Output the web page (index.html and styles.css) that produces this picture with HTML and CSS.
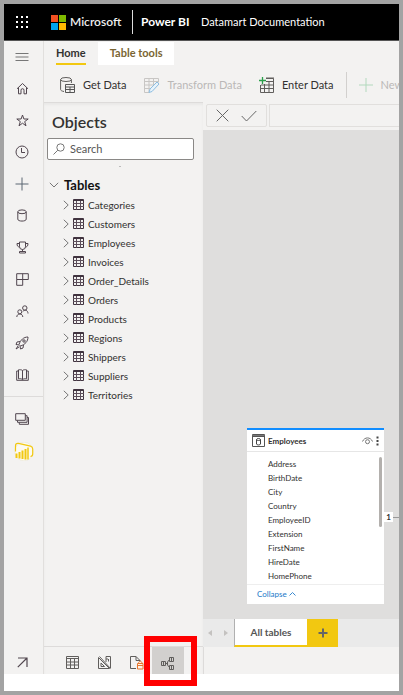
FILE: index.html
```html
<!DOCTYPE html>
<html lang="en">
<head>
<meta charset="utf-8">
<title>Datamart Documentation - Power BI</title>
<link rel="stylesheet" href="styles.css">
</head>
<body>
<svg class="defs" aria-hidden="true">
  <symbol id="table" viewBox="0 0 11 11"><path d="M.5 .5h10v10h-10zM0 1.5h11" fill="none" stroke="#40333f"/><path d="M0 4.500h11M0 7.500h11M3.500 2v9M7.500 2v9" fill="none" stroke="#5d4f5b"/></symbol>
  <symbol id="chev" viewBox="0 0 6 10"><path d="M.8 .8l4.4 4.2-4.4 4.2" fill="none" stroke="#777"/></symbol>
</svg>
<div class="app">
  <header class="top">
    <button class="waffle" aria-label="App launcher"><svg width="14" height="14" viewBox="0 0 14 14" fill="#fff"><path d="M1 1h2v2H1zM6 1h2v2H6zM11 1h2v2h-2zM1 6h2v2H1zM6 6h2v2H6zM11 6h2v2h-2zM1 11h2v2H1zM6 11h2v2H6zM11 11h2v2h-2z"/></svg></button>
    <svg width="15" height="15" viewBox="0 0 15 15"><path fill="#f25022" d="M0 0h7v7H0z"/><path fill="#7fba00" d="M8 0h7v7H8z"/><path fill="#00a4ef" d="M0 8h7v7H0z"/><path fill="#ffb900" d="M8 8h7v7H8z"/></svg>
    <span class="brand">Microsoft</span>
    <span class="product">Power BI</span>
    <span class="doc">Datamart Documentation</span>
  </header>
  <div class="body">
    <nav class="rail" aria-label="Main">
      <div class="rail-main">
        <button aria-label="Menu"><svg width="14" height="10" viewBox="0 0 14 10"><path d="M.5 1.5h13M.5 5h13M.5 8.5h13" stroke="#777"/></svg></button>
        <button aria-label="Home"><svg width="13" height="13" viewBox="0 0 13 13"><path d="M1 6.8L6.5 1.5 12 6.8M2.5 5.6v6.2H5V8.2a1.5 1.5 0 013 0v3.6h2.500V5.600"/></svg></button>
        <button aria-label="Favorites"><svg width="13" height="13" viewBox="0 0 13 13"><path d="M6.500 1l1.400 4h4.300L8.700 7.600 10 11.800 6.500 9.200 3 11.800 4.300 7.600 .8 5h4.300z"/></svg></button>
        <button aria-label="Recent"><svg width="14" height="14" viewBox="0 0 14 14"><circle cx="7" cy="7" r="6"/><path d="M6.500 3v4.500H10"/></svg></button>
        <button aria-label="Create"><svg width="14" height="14" viewBox="0 0 14 14"><path d="M7 .5v13M.5 7h13" stroke="#5b6673"/></svg></button>
        <button aria-label="Datasets"><svg width="10" height="13" viewBox="0 0 10 13"><path d="M.8 2.800v7.400c0 2.500 8.400 2.500 8.400 0V2.800"/><ellipse cx="5" cy="2.800" rx="4.200" ry="1.900"/></svg></button>
        <button aria-label="Goals"><svg width="13" height="13" viewBox="0 0 13 13"><path d="M3.500 1h6v4.500a3 3 0 01-6 0zM3.500 2.500H1c0 2.500 1 3.500 2.800 3.500M9.500 2.500H12c0 2.500-1 3.500-2.800 3.500M6.500 8.500v2M3.500 12v-1.500h6V12z"/></svg></button>
        <button aria-label="Apps"><svg width="13" height="13" viewBox="0 0 13 13"><path d="M.7 .7h11.600v5.800H.7zM.7 6.500v5.800h6V.7"/></svg></button>
        <button aria-label="Shared with me"><svg width="13" height="13" viewBox="0 0 13 13"><circle cx="8.800" cy="3" r="2.200"/><circle cx="3.800" cy="6.800" r="2"/><path d="M.8 12c0-4 6-4 6 0M6.800 6.500c2-2.500 5.200-1.200 5.200 2"/></svg></button>
        <button aria-label="Deployment pipelines"><svg width="14" height="14" viewBox="0 0 14 14"><path d="M4 8.500C5.500 4 8.500 1 13 1c0 4.500-3 7.500-7.500 9zM5 5.500l-3 .5-1 2.500 3 .5M8.500 9l-.5 3-2.500 1-.5-3M3 10l-2 3 3-2"/><circle cx="9" cy="5" r="1.200"/></svg></button>
        <button aria-label="Learn"><svg width="13" height="12" viewBox="0 0 13 12"><path d="M6.500 1.500v9M6.500 1.500C5.500 .6 3.500 .6 2.500 .8v9c1.500-.2 3-.2 4 .8 1-1 2.500-1 4-.8v-9c-1-.2-3-.2-4 .7M2.500 2H.7v9.300h11.600V2h-1.800"/></svg></button>
      </div>
      <div class="rail-spaces">
        <button aria-label="Workspaces"><svg width="14" height="12" viewBox="0 0 14 12"><path d="M.7 .7h9.600v6.600H.7zM2.500 7.500v1.800h9.600V2.700h-1.800M4.300 9.500v1.800h9.200V4.500h-1.400"/></svg></button>
        <button class="workspace" aria-label="Power BI workspace"><svg width="20" height="19" viewBox="0 0 20 19"><circle cx="10" cy="9.500" r="9.300" fill="#fcfaf0" stroke="#e8e4d0" stroke-width=".5"/><path d="M1.500 9.500V4c0-2 1-3 3-2.600l12 2.800c1.500.4 2.200 1.300 2.200 2.800v5c0 1.500-.8 2.300-2.200 2.500" fill="none" stroke="#f2c811" stroke-width="1.200"/><path d="M2.500 11.500v4.500M5.500 10v6.500M8.500 8.500v8.500M11.500 7v10.500" stroke="#f2c811" stroke-width="2"/><path d="M14 5.500v12" stroke="#f2c811" stroke-width="1.500"/></svg></button>
      </div>
      <button class="expand" aria-label="Expand"><svg width="11" height="11" viewBox="0 0 11 11"><path d="M1 1h9v9M10 1L.8 10.200" stroke-width="1.200"/></svg></button>
    </nav>
    <div class="work">
      <div class="ribbon">
        <div class="tabs"><button class="tab active">Home</button><button class="tab tools">Table tools</button></div>
        <div class="commands">
          <button class="get"><svg width="15" height="16" viewBox="0 0 15 16"><g fill="none" stroke="#605e5c"><path d="M4 14.500c-2-.3-3.400-1-3.400-2V2.500M11.400 2.500V6"/><ellipse cx="6" cy="2.500" rx="5.400" ry="2"/><path d="M5.500 7.500h9v8h-9zM5.500 10h9M5.500 12.500h9M10 10v5.500" stroke="#555"/></g></svg>Get Data</button>
          <button class="transform" disabled><svg width="16" height="15" viewBox="0 0 16 15"><path d="M5 14.500H.5V.5h14v4M.5 3.500h14M.5 7h9M.5 10.500h6M5 1v13M9.500 1v6" fill="none" stroke="#c8c6c4"/><path d="M6 11l7-7 2 2-7 7.500-3 1z" fill="#e8f3fb" stroke="#8dbde0"/></svg>Transform Data</button>
          <button class="enter"><svg width="15" height="16" viewBox="0 0 15 16"><path d="M7 1.500h7.500v14h-13V8M7 1h8M7 4.500h7.500M2 8h12.500M2 11.500h12.500M5.500 7v8.500M10 4.500v11" fill="none" stroke="#605e5c"/><path d="M3.500 0v7M0 3.500h7" stroke="#2ba04b" stroke-width="1.300"/></svg>Enter Data</button>
          <button class="new" disabled><svg width="14" height="14" viewBox="0 0 14 14"><path d="M7 0v14M0 7h14" stroke="#b2d9bd"/></svg>New</button>
        </div>
      </div>
      <div class="columns">
        <section class="objects">
          <h1>Objects</h1>
          <label class="search"><svg width="12" height="12" viewBox="0 0 12 12"><circle cx="7.500" cy="4.500" r="3.700"/><path d="M4.800 7.200L.5 11.500"/></svg><input type="search" aria-label="Search" placeholder="Search"></label>
          <div class="dot"></div>
          <h2><svg width="10" height="6" viewBox="0 0 10 6"><path d="M.8 .8L5 5 9.200 .8" fill="none" stroke="#777"/></svg>Tables</h2>
          <ul class="tree">
            <li><svg class="chev"><use href="#chev"/></svg><svg class="ti"><use href="#table"/></svg>Categories</li>
            <li><svg class="chev"><use href="#chev"/></svg><svg class="ti"><use href="#table"/></svg>Customers</li>
            <li><svg class="chev"><use href="#chev"/></svg><svg class="ti"><use href="#table"/></svg>Employees</li>
            <li><svg class="chev"><use href="#chev"/></svg><svg class="ti"><use href="#table"/></svg>Invoices</li>
            <li><svg class="chev"><use href="#chev"/></svg><svg class="ti"><use href="#table"/></svg>Order_Details</li>
            <li><svg class="chev"><use href="#chev"/></svg><svg class="ti"><use href="#table"/></svg>Orders</li>
            <li><svg class="chev"><use href="#chev"/></svg><svg class="ti"><use href="#table"/></svg>Products</li>
            <li><svg class="chev"><use href="#chev"/></svg><svg class="ti"><use href="#table"/></svg>Regions</li>
            <li><svg class="chev"><use href="#chev"/></svg><svg class="ti"><use href="#table"/></svg>Shippers</li>
            <li><svg class="chev"><use href="#chev"/></svg><svg class="ti"><use href="#table"/></svg>Suppliers</li>
            <li><svg class="chev"><use href="#chev"/></svg><svg class="ti"><use href="#table"/></svg>Territories</li>
          </ul>
          <div class="views">
            <button aria-label="Data view"><svg width="13" height="13" viewBox="0 0 13 13"><path d="M.5 .5h12v12H.5zM.5 2.500h12M.5 6h12M.5 9h12M4.500 3v9.500M8.500 3v9.500"/></svg></button>
            <button aria-label="Query view"><svg width="13" height="13" viewBox="0 0 13 13"><path d="M.5 1.500v11h11zM3 7v3.500h3.500zM1.500 .5l11 12M8 6V.500h4.500V12M8 3h2M10.500 3v2.500"/></svg></button>
            <button aria-label="SQL view"><svg width="16" height="14" viewBox="0 0 16 14"><path d="M8 12.500H2.500V.5H8l4 4V6M8 .5v4h4"/><path d="M9.500 7.500h5.500v5.500h-5.500zM9.500 9.500h5.500M10.500 7.500c0-3 3.500-3 3.500 0" stroke="#e8772e" fill="#fff3e8"/></svg></button>
            <button class="current" aria-label="Model view"><svg width="14" height="14" viewBox="0 0 14 14"><path d="M.5 5.500h4v4h-4zM8.500 1.500h4v4h-4zM8.500 9.500h4v4h-4zM4.500 7.500h2M8.500 3.500l-2 2.500v3l2 2.500M10.500 1.500v4M10.500 9.500v4M2.500 5.500v4"/></svg></button>
          </div>
        </section>
        <main class="model">
          <div class="formula">
            <div class="actions"><button aria-label="Cancel"><svg width="13" height="13" viewBox="0 0 13 13"><path d="M.7 .7l11.600 11.600M12.300 .7L.7 12.300"/></svg></button><button aria-label="Apply"><svg width="16" height="12" viewBox="0 0 16 12"><path d="M.7 6l4.800 5L15.300 1"/></svg></button></div>
            <input aria-label="Formula">
          </div>
          <div class="canvas">
            <article class="card">
              <header><svg width="13" height="13" viewBox="0 0 13 13"><path d="M.5 .5h12v12H.5zM.5 2.500h12" fill="none" stroke="#555"/><path d="M.5 1.500h12" stroke="#777"/><path d="M4.500 5.500v4.500c0 1.300 4 1.300 4 0V5.500c0-1.300-4-1.300-4 0s4 1.300 4 0" fill="none" stroke="#444"/></svg><h3>Employees</h3><svg class="eye" width="11" height="8" viewBox="0 0 11 8"><path d="M.5 4.500C2.500-.3 8.500-.3 10.500 4.500" fill="none" stroke="#777"/><circle cx="5.500" cy="4.700" r="2" fill="none" stroke="#777"/></svg><svg width="3" height="10" viewBox="0 0 3 10"><path d="M.5 .5h2v2h-2zM.5 4h2v2h-2zM.5 7.500h2v2h-2z" fill="#444"/></svg></header>
              <div class="fields">
                <ul><li>Address</li><li>BirthDate</li><li>City</li><li>Country</li><li>EmployeeID</li><li>Extension</li><li>FirstName</li><li>HireDate</li><li>HomePhone</li></ul>
                <div class="thumb"></div>
              </div>
              <footer><a href="#">Collapse <svg width="7" height="4" viewBox="0 0 7 4"><path d="M.5 3.500l3-3 3 3" fill="none" stroke="#3b8ad0"/></svg></a></footer>
              <div class="link"><span>1</span></div>
            </article>
          </div>
          <div class="sheets">
            <svg class="arrows" width="20" height="6" viewBox="0 0 20 6"><path d="M4 0v6L0 3zM16 0v6l4-3z" fill="#c4c2c0"/></svg>
            <button class="sheet">All tables</button>
            <button class="add" aria-label="Add layout"><svg width="10" height="10" viewBox="0 0 10 10"><path d="M5 .5v9M.5 5h9" stroke="#666" stroke-width="2"/></svg></button>
          </div>
          <div class="status"></div>
        </main>
      </div>
    </div>
  </div>
</div>
</body>
</html>
```
FILE: styles.css
```css
* { box-sizing: border-box; }
body {
  margin: 0;
  font: 11px/16px Lato, "Open Sans", sans-serif;
  color: #323130;
}
button {
  padding: 0;
  border: 0;
  background: none;
  font: inherit;
  color: inherit;
}
h1, h2, h3, ul { margin: 0; padding: 0; }
ul { list-style: none; }
svg { display: block; flex: none; }
.defs { position: absolute; width: 0; height: 0; }
.app {
  min-height: 100vh;
  display: flex;
  flex-direction: column;
  border: 4px solid #a3a3a3;
  padding-bottom: 17px;
  background: #fff;
}
.top {
  height: 37px;
  flex: none;
  display: flex;
  align-items: center;
  background: #000;
  border-bottom: 1px solid #555;
  color: #fff;
  white-space: nowrap;
  overflow: hidden;
}
.waffle { width: 36px; margin-right: 11px; display: flex; justify-content: center; }
.brand { margin-left: 4px; width: 54px; font-size: 12px; font-weight: 600; color: #eee; }
.product {
  margin-left: 8px;
  padding: 4px 0 4px 8px;
  width: 59px;
  border-left: 1px solid #ddd;
  font-size: 12px;
  font-weight: 700;
}
.doc { margin-left: 10px; }
.body { flex: 1; display: flex; background: #f3f2f1; min-height: 0; }
.rail {
  width: 40px;
  flex: none;
  display: flex;
  flex-direction: column;
  border-right: 1px solid #e1dfdd;
}
.rail svg { fill: none; stroke: #51464f; }
.rail button { display: flex; align-items: center; justify-content: center; width: 36px; }
.rail-main {
  flex: 0 0 356px;
  display: flex;
  flex-direction: column;
  padding-bottom: 5px;
  border-bottom: 1px solid #dddbda;
}
.rail-main button { flex: 1; }
.rail-spaces { padding-top: 6px; }
.rail-spaces button { height: 32px; }
.rail .workspace { width: 40px; }
.rail .expand { margin-top: auto; height: 24px; }
.work { flex: 1; min-width: 0; display: flex; flex-direction: column; }
.ribbon { flex: none; }
.tabs { height: 25px; padding: 1px 0 1px 12px; display: flex; gap: 12px; }
.tab { font-weight: 700; }
.active { border-bottom: 2px solid #f2c811; }
.tools { padding: 0 12px; background: #fff; color: #7a6532; border-bottom: 2px solid #fff; }
.commands {
  height: 36px;
  display: flex;
  align-items: center;
  padding: 2px 0 0 16px;
  overflow: hidden;
  white-space: nowrap;
}
.commands button { display: flex; align-items: center; gap: 8px; flex: none; margin-right: 17px; }
.commands button:disabled { color: #bab8b7; }
.commands .enter { margin-right: 12px; }
.commands .new { padding: 5px 0 5px 12px; border-left: 1px solid #d2d0ce; }
.columns { flex: 1; display: flex; min-height: 0; }
.objects {
  width: 159px;
  flex: none;
  display: flex;
  flex-direction: column;
  border-top: 1px solid #dddbda;
  box-shadow: inset 0 2px 2px #e9e8e7;
}
h1 { margin: 8px 8px 5px; font-size: 16px; line-height: 22px; font-weight: 600; }
.search {
  height: 22px;
  margin: 0 9px 0 3px;
  padding-left: 5px;
  display: flex;
  align-items: center;
  gap: 5px;
  background: #fff;
  border: 1px solid #8a8886;
  border-radius: 2px;
}
.search svg { fill: none; stroke: #777; }
.search input { flex: 1; min-width: 0; padding: 0; border: 0; outline: 0; font: inherit; background: none; }
.search input::placeholder { color: #555; opacity: 1; }
.dot { width: 2px; height: 1px; margin: 6px 82px 9px auto; background: #bbb; }
h2 {
  padding-left: 5px;
  display: flex;
  align-items: center;
  gap: 5px;
  font-size: 13px;
  line-height: 18px;
  font-weight: 700;
  color: #111;
}
.tree { padding-top: 1px; }
.tree li { height: 19px; padding-left: 19px; display: flex; align-items: center; font-size: 10px; }
.chev { width: 6px; height: 10px; margin-right: 4px; }
.ti { width: 11px; height: 11px; margin-right: 4px; }
.views {
  height: 28px;
  margin-top: auto;
  padding-left: 12px;
  display: flex;
  border-top: 1px solid #dddbda;
}
.views button { width: 32px; display: flex; align-items: center; justify-content: center; position: relative; padding-top: 4px; }
.views svg { fill: none; stroke: #605e5c; }
.views .current { background: #d2d0ce; }
.current::after {
  content: "";
  position: absolute;
  inset: -11px -13px -12px -8px;
  border: 6px solid #f00;
  z-index: 2;
}
.model { flex: 1; min-width: 0; display: flex; flex-direction: column; }
.formula { height: 28px; flex: none; padding: 2px 0 3px 3px; display: flex; gap: 2px; }
.actions { width: 61px; flex: none; display: flex; align-items: center; justify-content: center; gap: 12px; border: 1px solid #e1dfdd; border-radius: 2px; }
.actions svg { fill: none; stroke: #666; }
.formula input { flex: 1; min-width: 0; border: 1px solid #e1dfdd; border-right: 0; background: none; }
.canvas { flex: 1; background: #dfdedd; display: flex; align-items: flex-end; justify-content: flex-end; padding: 0 15px 15px; }
.card {
  width: 137px;
  position: relative;
  background: #fff;
  border-top: 2px solid #118dff;
  font-size: 8px;
  line-height: 14px;
}
.card header { height: 22px; padding: 0 5px; display: flex; align-items: center; gap: 3px; border-bottom: 1px solid #e6e6e6; }
h3 { font-size: 8px; font-weight: 700; }
.eye { margin-left: auto; }
.fields { display: flex; justify-content: space-between; padding: 5px 2px 1px 21px; }
.fields li { height: 14px; }
.thumb { width: 3px; height: 70px; background: #b3b0ad; border-radius: 2px; }
.card footer { height: 20px; padding: 2px 10px; border-top: 1px solid #eee; }
.card a { display: flex; align-items: center; gap: 2px; color: #1a78c8; text-decoration: none; }
.link {
  position: absolute;
  left: 100%;
  top: 82px;
  width: 15px;
  display: flex;
  align-items: center;
}
.link span { width: 9px; line-height: 10px; text-align: center; font-weight: 700; background: #fff; }
.link::after { content: ""; flex: 1; border-top: 1px solid #999; }
.sheets { height: 28px; flex: none; display: flex; background: #eaeaea; }
.arrows { margin: 11px 6px 0 5px; }
.sheet { width: 73px; background: #fff; border-left: 1px solid #b0b0b0; border-bottom: 2px solid #f2c811; font-weight: 700; font-size: 10px; color: #555; }
.add { width: 31px; display: flex; align-items: center; justify-content: center; background: #f2c811; }
.status { height: 27px; flex: none; border-left: 1px solid #dddbda; }
```
